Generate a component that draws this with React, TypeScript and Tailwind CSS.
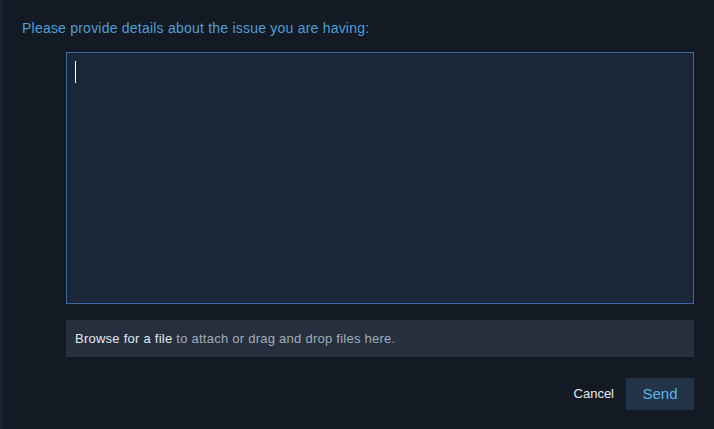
export default function App() {
  return (
    <div
      className="flex h-[429px] w-[714px] bg-[#131a24] text-[14px]"
      style={{ fontFamily: '"Liberation Sans", Arial, sans-serif' }}
    >
      <div className="w-[2px] shrink-0 bg-[#1b2436]" />
      <div className="flex flex-1 flex-col pl-[20px] pr-[20px] pt-[19px]">
        <p className="text-[14px] leading-[18px] tracking-[0.22px] text-[#4f9fd6]">
          Please provide details about the issue you are having:
        </p>
        <div className="ml-[44px] mt-[15px] flex flex-col">
          <div className="relative h-[252px] w-[628px] border border-[#3a68a6] bg-[#1b2738]">
            <div className="absolute left-[8px] top-[8px] h-[22px] w-[1px] bg-white" />
          </div>
          <div className="mt-[16px] flex h-[37px] w-[628px] items-center bg-[#252f3e] px-[9px] text-[13px] tracking-[0.25px]">
            <span className="text-[#e4e8ec]">Browse for a file</span>
            <span className="text-[#a3acb8]">&nbsp;to attach or drag and drop files here.</span>
          </div>
          <div className="mt-[21px] flex items-center justify-end gap-[12px]">
            <span className="text-[13px] text-[#e6e9ec]">Cancel</span>
            <button className="h-[32px] w-[68px] rounded-[2px] bg-[#233449] text-[15px] text-[#5bb2ea]">
              Send
            </button>
          </div>
        </div>
      </div>
    </div>
  )
}
